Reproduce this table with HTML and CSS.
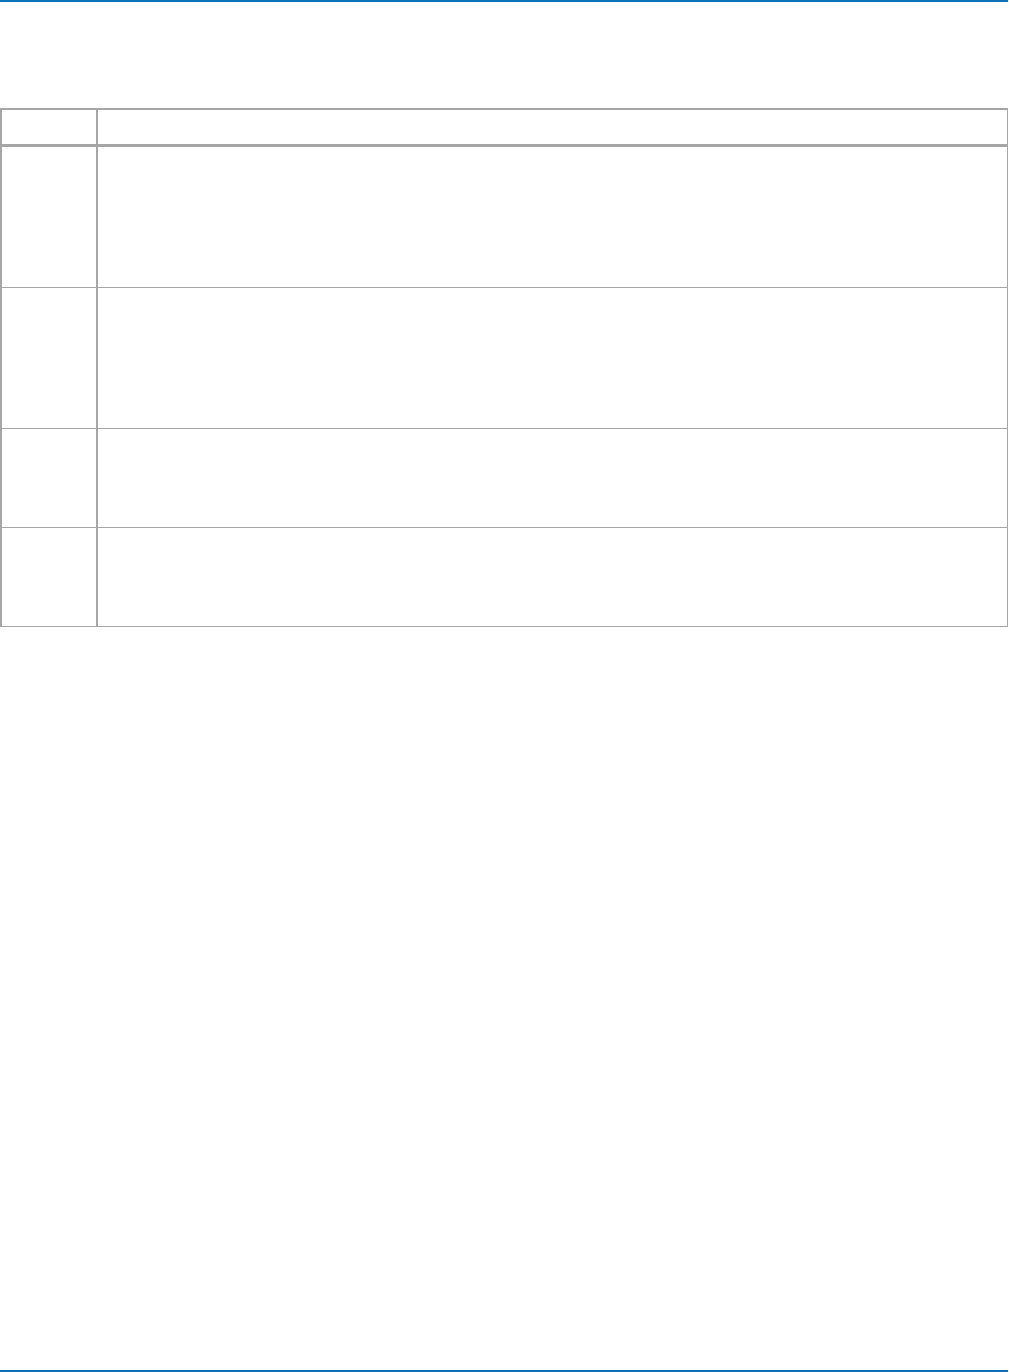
FILE: index.html
```html
<!DOCTYPE html>
<html lang="en">
<head>
    <meta charset="UTF-8">
    <meta name="viewport" content="width=device-width, initial-scale=1.0">
    <title>Page</title>
    <link rel="stylesheet" href="styles.css">
</head>
<body>
    <div class="page">
        <div class="rule"></div>

        <div class="sheet">
            <div class="cell head key"></div>
            <div class="cell head"></div>

            <div class="cell tall key"></div>
            <div class="cell tall"></div>

            <div class="cell tall key"></div>
            <div class="cell tall"></div>

            <div class="cell short key"></div>
            <div class="cell short"></div>

            <div class="cell short last key"></div>
            <div class="cell short last"></div>
        </div>

        <div class="rule bottom"></div>
    </div>
</body>
</html>
```

FILE: styles.css
```css
* {
    box-sizing: border-box;
}
body {
    margin: 0;
    font-family: "Liberation Sans", Arial, sans-serif;
    background: #ffffff;
}
.page {
    display: flex;
    flex-direction: column;
    min-height: 100vh;
}
.rule {
    width: 1008px;
    height: 2px;
    background-color: #0e71b8;
}
.rule.bottom {
    margin-top: auto;
}
.sheet {
    width: 1008px;
    margin-top: 106px;
    display: grid;
    grid-template-columns: 96px 1fr;
    border-top: 2px solid #a6a6a6;
    border-left: 2px solid #a6a6a6;
    border-right: 1px solid #a6a6a6;
    border-bottom: 1px solid #a6a6a6;
}
.cell {
    border-bottom: 1px solid #a6a6a6;
}
.key {
    border-right: 2px solid #a6a6a6;
}
.head {
    height: 37px;
    border-bottom: 3px solid #a6a6a6;
}
.tall {
    height: 141px;
}
.short {
    height: 99px;
}
.last {
    height: 98px;
    border-bottom: none;
}
```
